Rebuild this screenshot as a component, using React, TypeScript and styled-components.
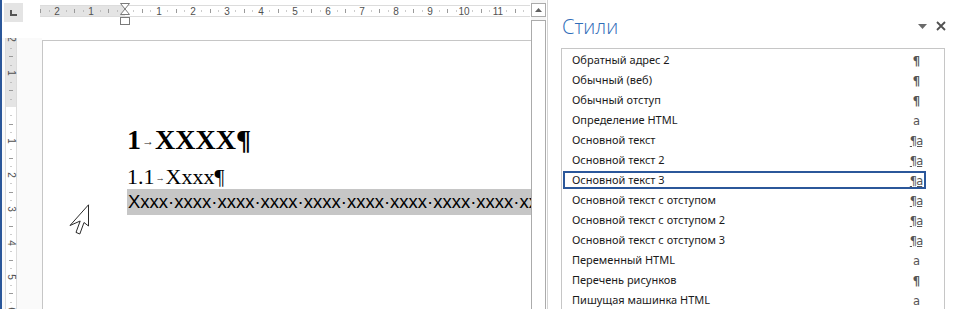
import React from 'react';
import styled, { createGlobalStyle } from 'styled-components';

const UNIT = 33.9; // pixels per centimetre on the rulers

type StyleItem = { name: string; kind: 'para' | 'char' | 'linked' };

const styles: StyleItem[] = [
    { name: 'Обратный адрес 2', kind: 'para' },
    { name: 'Обычный (веб)', kind: 'para' },
    { name: 'Обычный отступ', kind: 'para' },
    { name: 'Определение HTML', kind: 'char' },
    { name: 'Основной текст', kind: 'linked' },
    { name: 'Основной текст 2', kind: 'linked' },
    { name: 'Основной текст 3', kind: 'linked' },
    { name: 'Основной текст с отступом', kind: 'linked' },
    { name: 'Основной текст с отступом 2', kind: 'linked' },
    { name: 'Основной текст с отступом 3', kind: 'linked' },
    { name: 'Переменный HTML', kind: 'char' },
    { name: 'Перечень рисунков', kind: 'para' },
    { name: 'Пишущая машинка HTML', kind: 'char' },
];

const SELECTED = 6;

const HorizontalRuler: React.FC = () => {
    const zero = 85;
    const marks: React.ReactNode[] = [];
    for (let q = -10; q <= 47; q++) {
        if (q === 0) continue;
        const x = Math.round(zero + (q * UNIT) / 4);
        if (q % 4 === 0) {
            marks.push(
                <text key={q} x={x} y={14.5} fontSize={10} textAnchor="middle" fill="#505050">
                    {Math.abs(q / 4)}
                </text>
            );
        } else if (q % 2 === 0) {
            marks.push(<rect key={q} x={x} y={9} width={1} height={4} fill="#9a9a9a" />);
        } else {
            marks.push(<rect key={q} x={x} y={10.5} width={1} height={1} fill="#9a9a9a" />);
        }
    }
    return (
        <RulerSvg width={490} height={26}>
            <rect x={0} y={5} width={490} height={12} fill="#fff" />
            <rect x={0} y={5} width={85} height={12} fill="#e4e4e4" />
            <line x1={0} y1={5.5} x2={490} y2={5.5} stroke="#dcdcdc" />
            <line x1={0} y1={16.5} x2={490} y2={16.5} stroke="#dcdcdc" />
            {marks}
            {/* indent marker */}
            <path d="M80.5 3.5 H89.5 L85 9 L89.5 14.5 H80.5 L85 9 Z" fill="#fff" stroke="#7a7a7a" />
            <rect x={80.5} y={17.5} width={9} height={7} fill="#fff" stroke="#7a7a7a" />
        </RulerSvg>
    );
};

const VerticalRuler: React.FC = () => {
    const zero = 69;
    const marks: React.ReactNode[] = [];
    for (let q = -8; q <= 32; q++) {
        if (q === 0) continue;
        const y = Math.round(zero + (q * UNIT) / 4);
        if (q % 4 === 0) {
            marks.push(
                <text
                    key={q}
                    x={6}
                    y={y + 3.5}
                    fontSize={10}
                    textAnchor="middle"
                    fill="#505050"
                    transform={`rotate(90 6 ${y})`}
                >
                    {Math.abs(q / 4)}
                </text>
            );
        } else if (q % 2 === 0) {
            marks.push(<rect key={q} x={4} y={y} width={4} height={1} fill="#9a9a9a" />);
        } else {
            marks.push(<rect key={q} x={5.5} y={y} width={1} height={1} fill="#9a9a9a" />);
        }
    }
    return (
        <RulerSvg width={12} height={271}>
            <rect x={0} y={0} width={12} height={271} fill="#fff" />
            <rect x={0} y={0} width={12} height={zero} fill="#e4e4e4" />
            <line x1={0.5} y1={0} x2={0.5} y2={271} stroke="#dcdcdc" />
            <line x1={11.5} y1={0} x2={11.5} y2={271} stroke="#dcdcdc" />
            {marks}
        </RulerSvg>
    );
};

const StyleIcon: React.FC<{ kind: StyleItem['kind'] }> = ({ kind }) => {
    if (kind === 'para') return <IconGlyph $bold>¶</IconGlyph>;
    if (kind === 'char') return <IconGlyph>a</IconGlyph>;
    return <IconGlyph $underline>¶a</IconGlyph>;
};

const App: React.FC = () => {
    return (
        <>
            <GlobalStyle />
            <Shell>
                <BlueEdge />
                <Workspace>
                    <TopStrip>
                        <TabSelector>
                            <svg width={7} height={6}>
                                <path d="M1 0 V5 H7" fill="none" stroke="#555" strokeWidth={2} />
                            </svg>
                        </TabSelector>
                        <HorizontalRuler />
                    </TopStrip>
                    <Body>
                        <RulerColumn>
                            <VerticalRuler />
                        </RulerColumn>
                        <Page>
                            <Heading1>
                                1<TabArrow>→</TabArrow>XXXX¶
                            </Heading1>
                            <Heading2>
                                1.1<TabArrow>→</TabArrow>Xxxx¶
                            </Heading2>
                            <Highlighted>
                                Xxxx·xxxx·xxxx·xxxx·xxxx·xxxx·xxxx·xxxx·xxxx·xxxx·xxxx·xxxx
                            </Highlighted>
                            <Pointer width={21} height={32} viewBox="0 0 21 32">
                                <path
                                    d="M19.5 0.8 V22 L15 18.5 L10.8 30 L7 28.4 L11.2 17 L1 21.5 Z"
                                    fill="#fff"
                                    stroke="#2a2a2a"
                                    strokeWidth={1}
                                    strokeLinejoin="miter"
                                />
                            </Pointer>
                        </Page>
                    </Body>
                </Workspace>
                <ScrollBar>
                    <ScrollButton>
                        <svg width={7} height={4}>
                            <path d="M0 4 L3.5 0 L7 4 Z" fill="#606060" />
                        </svg>
                    </ScrollButton>
                    <ScrollTrack />
                </ScrollBar>
                <Panel>
                    <PanelHeader>
                        <PanelTitle>Стили</PanelTitle>
                        <HeaderTools>
                            <svg width={9} height={5}>
                                <path d="M0 0 H9 L4.5 5 Z" fill="#6a6a6a" />
                            </svg>
                            <svg width={10} height={10}>
                                <path d="M1 1 L9 9 M9 1 L1 9" stroke="#505050" strokeWidth={1.8} />
                            </svg>
                        </HeaderTools>
                    </PanelHeader>
                    <StyleList>
                        {styles.map((s, i) => (
                            <StyleRow key={s.name} $selected={i === SELECTED}>
                                <StyleName>{s.name}</StyleName>
                                <IconCell>
                                    <StyleIcon kind={s.kind} />
                                </IconCell>
                            </StyleRow>
                        ))}
                    </StyleList>
                </Panel>
            </Shell>
        </>
    );
};

// Styled Components
const GlobalStyle = createGlobalStyle`
    html, body {
        margin: 0;
        padding: 0;
        background: #fff;
    }
    body {
        width: 960px;
        height: 309px;
        overflow: hidden;
    }
`;

const Shell = styled.div`
    display: flex;
    width: 960px;
    height: 309px;
    overflow: hidden;
    background: #fff;
`;

const BlueEdge = styled.div`
    width: 2px;
    flex-shrink: 0;
    background: #2b579a;
`;

const Workspace = styled.div`
    width: 529px;
    flex-shrink: 0;
    display: flex;
    flex-direction: column;
    overflow: hidden;
`;

const TopStrip = styled.div`
    height: 38px;
    flex-shrink: 0;
    display: flex;
    align-items: flex-start;
`;

const TabSelector = styled.div`
    width: 19px;
    height: 19px;
    margin: 3px 0 0 2px;
    background: #e4e4e4;
    display: flex;
    align-items: center;
    justify-content: center;
`;

const RulerSvg = styled.svg`
    display: block;
    flex-shrink: 0;
    margin-left: 17px;

    text {
        font-family: 'Liberation Sans', Arial, sans-serif;
    }
`;

const Body = styled.div`
    flex: 1;
    display: flex;
    min-height: 0;
`;

const RulerColumn = styled.div`
    width: 40px;
    flex-shrink: 0;
    background: #fafafa;

    ${RulerSvg} {
        margin-left: 3px;
    }
`;

const Page = styled.div`
    position: relative;
    flex: 1;
    margin-top: 2px;
    border-top: 1px solid #c6c6c6;
    border-left: 1px solid #c6c6c6;
    background: #fff;
    padding: 83px 0 0 84px;
    overflow: hidden;
    font-family: 'Liberation Serif', 'Times New Roman', serif;
    color: #000;
`;

const Heading1 = styled.div`
    font-size: 28px;
    line-height: 32px;
    font-weight: 700;
    white-space: nowrap;
`;

const Heading2 = styled.div`
    margin-top: 5px;
    font-size: 22px;
    line-height: 28px;
    white-space: nowrap;
`;

const TabArrow = styled.span`
    font-size: 0.42em;
    font-weight: 400;
    vertical-align: 0.35em;
    margin: 0 0.1em;
    color: #222;
`;

const Highlighted = styled.div`
    margin-top: -3px;
    height: 26px;
    line-height: 26px;
    background: #c6c6c6;
    font-family: 'Liberation Sans', Arial, sans-serif;
    font-size: 18.5px;
    white-space: nowrap;
    padding-left: 1px;
`;

const Pointer = styled.svg`
    position: absolute;
    left: 26px;
    top: 163px;
`;

const ScrollBar = styled.div`
    width: 15px;
    flex-shrink: 0;
    display: flex;
    flex-direction: column;
    padding-top: 3px;
    background: #f6f6f6;
`;

const ScrollButton = styled.div`
    height: 14px;
    box-sizing: border-box;
    border: 1px solid #ababab;
    background: #fff;
    display: flex;
    align-items: center;
    justify-content: center;
`;

const ScrollTrack = styled.div`
    flex: 1;
    margin-top: 3px;
    border: 1px solid #ababab;
    border-bottom: none;
    background: #fff;
`;

const Panel = styled.div`
    flex: 1;
    margin-left: 1px;
    border-left: 1px solid #d4d4d4;
    background: #fff;
    display: flex;
    flex-direction: column;
    min-width: 0;
`;

const PanelHeader = styled.div`
    height: 48px;
    flex-shrink: 0;
    box-sizing: border-box;
    display: flex;
    align-items: flex-start;
    justify-content: space-between;
    padding: 15px 14px 0 14px;
`;

const PanelTitle = styled.div`
    font-family: 'Open Sans', 'Noto Sans', sans-serif;
    font-weight: 300;
    font-size: 20px;
    line-height: 24px;
    color: #2e6cb8;
`;

const HeaderTools = styled.div`
    display: flex;
    align-items: center;
    gap: 9px;
    margin-top: 6px;

    svg {
        display: block;
    }
`;

const StyleList = styled.div`
    flex: 1;
    margin-left: 13px;
    width: 384px;
    box-sizing: border-box;
    border: 1px solid #c6c6c6;
    border-bottom: none;
    padding-top: 2px;
    display: flex;
    flex-direction: column;
    gap: 2px;
`;

const StyleRow = styled.div<{ $selected: boolean }>`
    width: 363px;
    height: 18px;
    flex-shrink: 0;
    margin-left: 1px;
    box-sizing: border-box;
    border: 2px solid ${props => (props.$selected ? '#2b579a' : 'transparent')};
    display: flex;
    align-items: center;
    padding-left: 7px;
`;

const StyleName = styled.div`
    flex: 1;
    font-family: 'Noto Sans', 'Open Sans', sans-serif;
    font-size: 11px;
    line-height: 14px;
    color: #1a1a1a;
    white-space: nowrap;
`;

const IconCell = styled.div`
    width: 16px;
    text-align: center;
    line-height: 14px;
`;

const IconGlyph = styled.span<{ $bold?: boolean; $underline?: boolean }>`
    font-family: 'DejaVu Sans', 'Liberation Sans', sans-serif;
    font-size: 11.5px;
    font-weight: ${props => (props.$bold ? 700 : 400)};
    color: #555;
    text-decoration: ${props => (props.$underline ? 'underline' : 'none')};
    letter-spacing: -1px;
`;

export default App;
